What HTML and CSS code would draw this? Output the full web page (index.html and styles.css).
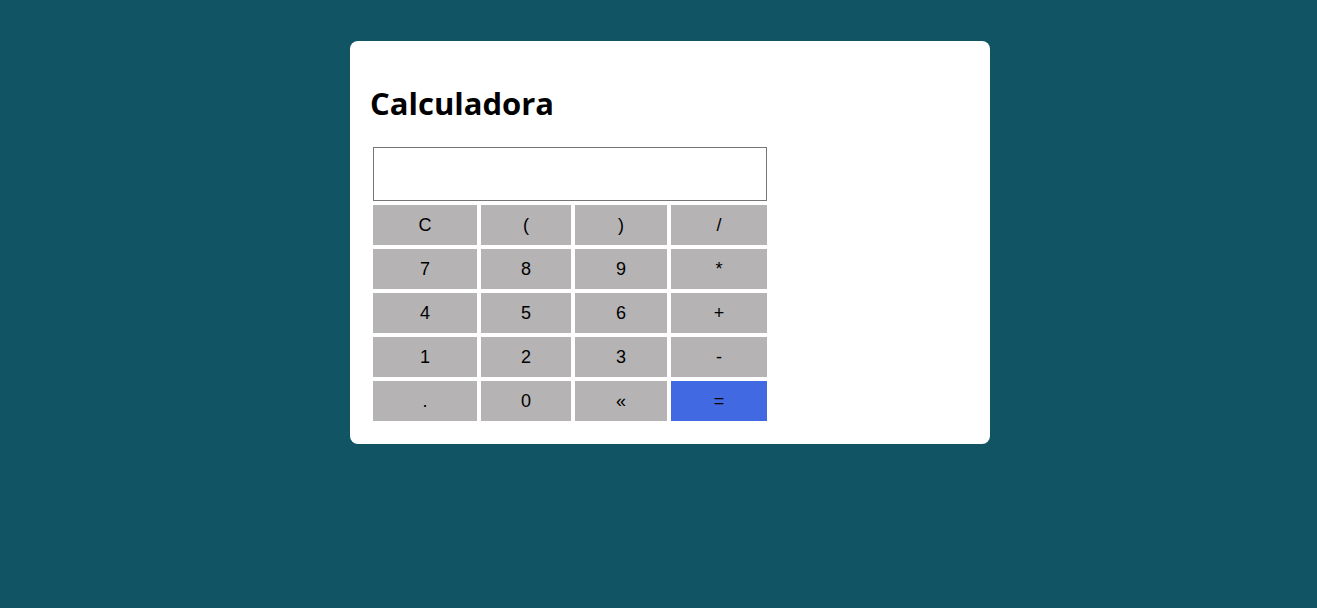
FILE: index.html
```html
<!DOCTYPE html>
<html lang="es">
<head>
<meta charset="utf-8">
<title>Calculadora</title>
<link rel="stylesheet" href="styles.css">
</head>
<body>
<main class="page">
  <section class="card">
    <h2 class="title">Calculadora</h2>
    <div class="calc">
      <input class="display" type="text">
      <button class="key">C</button>
      <button class="key">(</button>
      <button class="key">)</button>
      <button class="key">/</button>
      <button class="key">7</button>
      <button class="key">8</button>
      <button class="key">9</button>
      <button class="key">*</button>
      <button class="key">4</button>
      <button class="key">5</button>
      <button class="key">6</button>
      <button class="key">+</button>
      <button class="key">1</button>
      <button class="key">2</button>
      <button class="key">3</button>
      <button class="key">-</button>
      <button class="key">.</button>
      <button class="key">0</button>
      <button class="key">&laquo;</button>
      <button class="key key-eq">=</button>
    </div>
  </section>
</main>
</body>
</html>
```
FILE: styles.css
```css
html, body {
  margin: 0;
  height: 100%;
}
body {
  background: #115564;
  font-family: "Open Sans", sans-serif;
}
.page {
  padding: 41px 0 0 350px;
}
.card {
  width: 640px;
  box-sizing: border-box;
  background: #ffffff;
  border-radius: 8px;
  padding: 42px 20px 23px 20px;
}
.title {
  margin: 0 0 24px 0;
  font-size: 31px;
  font-weight: 700;
  line-height: 40px;
  color: #000;
}
.calc {
  display: grid;
  grid-template-columns: 104px 90px 92px 96px;
  grid-template-rows: 54px repeat(5, 40px);
  gap: 4px;
  margin-left: 3px;
  width: 394px;
}
.display {
  grid-column: 1 / -1;
  height: 54px;
  box-sizing: border-box;
  border: 1px solid #767676;
  background: #fff;
  margin: 0;
  padding: 0 4px;
  font-size: 18px;
}
.key {
  border: none;
  margin: 0;
  padding: 0;
  background: #b5b3b4;
  color: #000;
  font-family: "Liberation Sans", Arial, sans-serif;
  font-size: 18px;
}
.key-eq {
  background: #4169e1;
}
```
